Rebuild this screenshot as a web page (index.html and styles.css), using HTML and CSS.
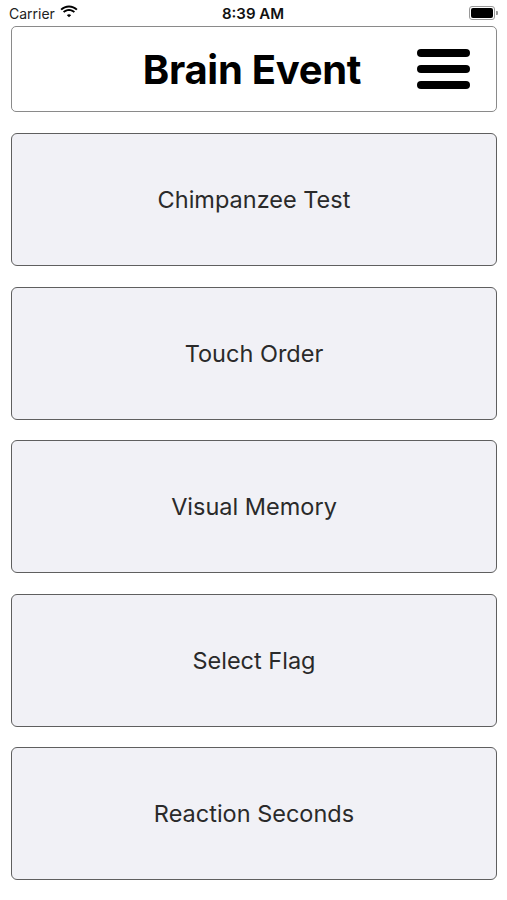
FILE: index.html
```html
<!DOCTYPE html>
<html lang="en">
<head>
<meta charset="UTF-8">
<meta name="viewport" content="width=device-width, initial-scale=1.0">
<title>Brain Event</title>
<link rel="stylesheet" href="styles.css">
</head>
<body>
<div class="status-bar">
    <div class="carrier">
        Carrier
        <svg class="wifi" width="18" height="13" viewBox="0 0 17 12">
            <path d="M8.5 2.2c2.6 0 5 1 6.8 2.7l1.3-1.3C14.4 1.5 11.6.3 8.5.3S2.6 1.5.4 3.6l1.3 1.3C3.5 3.2 5.9 2.2 8.5 2.2z" fill="#000"/>
            <path d="M8.5 5.5c1.7 0 3.2.6 4.4 1.7l1.3-1.3C12.7 4.5 10.7 3.6 8.5 3.6S4.3 4.5 2.8 5.9l1.3 1.3C5.3 6.1 6.8 5.5 8.5 5.5z" fill="#000"/>
            <path d="M8.5 8.7c.8 0 1.5.3 2 .8l-2 2-2-2c.5-.5 1.2-.8 2-.8z" fill="#000"/>
        </svg>
    </div>
    <div class="time">8:39 AM</div>
    <div class="battery">
        <span class="battery-body"><span class="battery-level"></span></span>
        <span class="battery-tip"></span>
    </div>
</div>

<div class="header">
    <h1>Brain Event</h1>
    <div class="menu-icon">
        <span></span>
        <span></span>
        <span></span>
    </div>
</div>

<div class="menu-list">
    <button class="menu-button">Chimpanzee Test</button>
    <button class="menu-button">Touch Order</button>
    <button class="menu-button">Visual Memory</button>
    <button class="menu-button">Select Flag</button>
    <button class="menu-button">Reaction Seconds</button>
</div>
</body>
</html>
```

FILE: styles.css
```css
body {
    font-family: Inter, "Noto Sans", sans-serif;
    background-color: #fff;
    margin: 0;
    padding: 0 10px 0 11px;
}

.status-bar {
    height: 26px;
    display: flex;
    align-items: center;
    justify-content: space-between;
    position: relative;
    margin-left: -2px;
}

.carrier {
    font-size: 14px;
    color: #222;
    display: flex;
    align-items: center;
    gap: 5px;
    margin-top: 1px;
}

.wifi {
    margin-top: -4px;
}

.time {
    position: absolute;
    left: 0;
    right: 0;
    text-align: center;
    font-size: 15px;
    font-weight: 600;
    color: #111;
}

.battery {
    display: flex;
    align-items: center;
    margin-right: -1px;
    margin-top: -1px;
}

.battery-body {
    width: 22px;
    height: 10px;
    border: 1px solid #999;
    border-radius: 3px;
    padding: 1px;
    display: block;
}

.battery-level {
    display: block;
    width: 100%;
    height: 100%;
    background-color: #000;
    border-radius: 2px;
}

.battery-tip {
    width: 2px;
    height: 4px;
    background-color: #999;
    border-radius: 0 1px 1px 0;
    margin-left: 1px;
}

.header {
    height: 84px;
    border: 1px solid #8a8a8a;
    border-radius: 5px;
    display: flex;
    align-items: center;
    justify-content: center;
    position: relative;
}

.header h1 {
    margin: 0 0 0 -4px;
    font-size: 40px;
    font-weight: 700;
    color: #000;
    letter-spacing: -0.3px;
}

.menu-icon {
    position: absolute;
    right: 26px;
    top: 22px;
    width: 53px;
    display: flex;
    flex-direction: column;
    gap: 8px;
}

.menu-icon span {
    display: block;
    height: 8px;
    background-color: #000;
    border-radius: 4px;
}

.menu-list {
    display: flex;
    flex-direction: column;
    gap: 20.5px;
    margin-top: 21px;
}

.menu-button {
    height: 133px;
    width: 100%;
    background-color: #f1f1f6;
    border: 1.5px solid #5f5f5f;
    border-radius: 6px;
    font-family: Inter, "Noto Sans", sans-serif;
    font-size: 23.5px;
    color: #2a2a2a;
    padding: 0;
}
```
